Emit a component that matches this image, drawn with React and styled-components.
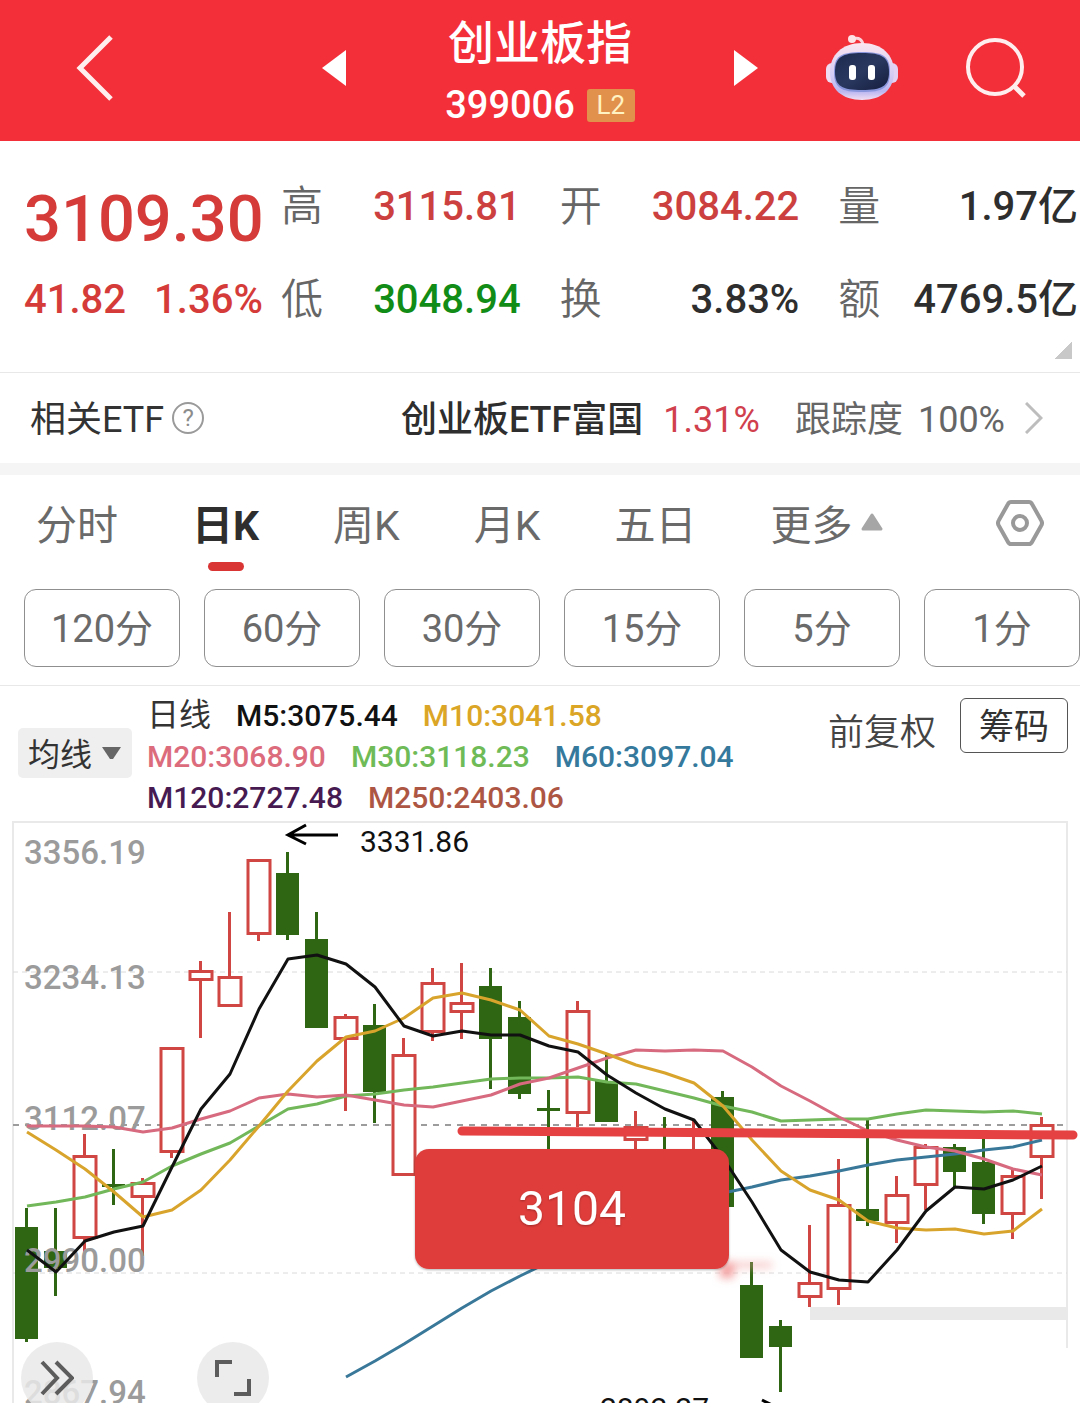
import React, { useState } from "react";
import styled, { createGlobalStyle } from "styled-components";

const GlobalStyle = createGlobalStyle`
  * {
    box-sizing: border-box;
  }
  body {
    margin: 0;
    background-color: #fff;
    color: #333;
    font-family: Roboto, "Noto Sans CJK SC", sans-serif;
  }
  button, select {
    font-family: inherit;
    margin: 0;
    padding: 0;
    border: none;
    background: none;
    color: inherit;
    cursor: pointer;
  }
  svg {
    display: block;
  }
`;

const Page = styled.div`
  width: 100%;
  overflow: hidden;
`;

/* header */

const Header = styled.header`
  display: grid;
  grid-template-columns: 32fr 36fr 32fr;
  align-items: center;
  height: 141px;
  background-color: #f32f39;
  color: #fff;
`;

const HeaderSide = styled.div`
  display: flex;
  align-items: center;
  justify-content: space-between;
  padding-bottom: 6px;
  padding-left: ${(props) => (props.$left ? "76px" : "0")};
  padding-right: ${(props) => (props.$left ? "0" : "54px")};
`;

const TitleBlock = styled.div`
  display: flex;
  flex-direction: column;
  align-items: center;
  padding-top: 5px;
`;

const Title = styled.h1`
  margin: 0;
  font-size: 46px;
  line-height: 64px;
  font-weight: 500;
`;

const CodeLine = styled.div`
  display: flex;
  align-items: center;
  gap: 12px;
  font-size: 38px;
  line-height: 60px;
  font-weight: 500;
`;

const LevelBadge = styled.span`
  width: 48px;
  border-radius: 3px;
  background-color: #e2914c;
  color: #fff3c4;
  font-size: 26px;
  line-height: 33px;
  font-weight: 400;
  text-align: center;
`;

/* quote */

const Quote = styled.section`
  padding: 36px 2px 13px 24px;
  border-bottom: 1px solid #e8e8e8;
`;

const QuoteBody = styled.div`
  display: flex;
`;

const PriceBlock = styled.div`
  width: 257px;
  flex-shrink: 0;
  color: #d43b39;
  font-weight: 500;
`;

const Price = styled.div`
  font-size: 65px;
  line-height: 84px;
`;

const Change = styled.div`
  display: flex;
  gap: 28px;
  margin-top: 9px;
  font-size: 40px;
  line-height: 60px;
`;

const Stats = styled.dl`
  flex: 1;
  display: grid;
  grid-template-columns: repeat(3, 1fr);
  gap: 33px 39px;
  margin: 0;
`;

const Stat = styled.div`
  display: flex;
  justify-content: space-between;
  white-space: nowrap;
  line-height: 60px;
`;

const StatLabel = styled.dt`
  color: #666;
  font-size: 42px;
  font-weight: 350;
`;

const StatValue = styled.dd`
  margin: 0;
  font-size: 40px;
  font-weight: 500;
  color: ${(props) => props.$color || "#2e2e2e"};
`;

const Corner = styled.div`
  width: 17px;
  height: 17px;
  margin: 12px 6px 0 auto;
  background: linear-gradient(135deg, transparent 50%, #c8c8c8 50%);
`;

/* related fund */

const EtfRow = styled.section`
  display: flex;
  align-items: center;
  height: 102px;
  padding: 0 37px 0 30px;
  border-bottom: 12px solid #f5f5f5;
  font-size: 36px;
`;

const EtfTitle = styled.span`
  padding-bottom: 4px;
`;

const HelpButton = styled.button`
  width: 32px;
  height: 32px;
  margin-left: 8px;
  border: 2px solid #9a9a9a;
  border-radius: 50%;
  color: #8c8c8c;
  font-size: 24px;
  line-height: 28px;
`;

const EtfLink = styled.a`
  display: flex;
  align-items: center;
  margin-left: auto;
  color: #666;
  text-decoration: none;
`;

const EtfTexts = styled.span`
  display: flex;
  align-items: baseline;
  padding-bottom: 4px;
`;

const EtfName = styled.span`
  color: #2e2e2e;
  font-weight: 500;
`;

const EtfChange = styled.span`
  margin: 0 35px 0 20px;
  color: #d0404d;
`;

const EtfTrack = styled.span`
  margin: 0 20px 0 15px;
`;

/* period switches */

const Tabs = styled.nav`
  display: flex;
  gap: 74px;
  height: 100px;
  padding: 0 36px;
`;

const Tab = styled.button`
  position: relative;
  display: flex;
  align-items: center;
  gap: 8px;
  padding-bottom: 6px;
  font-size: 41px;
  font-weight: ${(props) => (props.$active ? 700 : 400)};
  color: ${(props) => (props.$active ? "#2e2e2e" : "#6a6a6a")};

  &::after {
    content: "";
    display: ${(props) => (props.$active ? "block" : "none")};
    position: absolute;
    bottom: 4px;
    left: 50%;
    width: 36px;
    height: 9px;
    margin-left: -18px;
    border-radius: 5px;
    background-color: #d93535;
  }
`;

const SettingsButton = styled.button`
  margin-left: auto;
  padding-bottom: 4px;
`;

const Minutes = styled.div`
  display: grid;
  grid-template-columns: repeat(6, 1fr);
  gap: 24px;
  padding: 14px 0 18px 24px;
  border-bottom: 1px solid #e8e8e8;
`;

const MinuteButton = styled.button`
  height: 78px;
  padding-bottom: 5px;
  border: 1px solid #8f8f8f;
  border-radius: 12px;
  color: #6a6a6a;
  font-size: 38px;
`;

/* legend */

const LegendBar = styled.section`
  display: flex;
  align-items: flex-start;
  padding: 9px 12px 2px 18px;
`;

const SelectBox = styled.label`
  display: flex;
  align-items: center;
  width: 114px;
  height: 50px;
  margin-top: 33px;
  padding-left: 10px;
  border-radius: 5px;
  background-color: #efefef;

  select {
    appearance: none;
    width: 74px;
    padding-top: 4px;
    font-size: 32px;
    line-height: 46px;
  }
`;

const Legend = styled.div`
  flex: 1;
  margin-left: 15px;
  font-size: 30px;
  line-height: 41px;
  font-weight: 500;
`;

const LegendRow = styled.div`
  display: flex;
  gap: 25px;
`;

const LegendTitle = styled.span`
  font-size: 32px;
  font-weight: 400;
`;

const LegendItem = styled.span`
  color: ${(props) => props.$color};
  white-space: nowrap;
`;

const Adjust = styled.button`
  margin: 12px 24px 0 0;
  color: #444;
  font-size: 36px;
  line-height: 52px;
  font-weight: 350;
`;

const ChipButton = styled.button`
  width: 108px;
  height: 55px;
  margin-top: 3px;
  padding-top: 4px;
  border: 1px solid #555;
  border-radius: 6px;
  font-size: 35px;
  line-height: 48px;
`;

/* chart */

const ChartArea = styled.section`
  position: relative;
  overflow: hidden;

  svg.plot {
    width: 100%;
    height: auto;
  }
`;

const RoundButton = styled.button`
  position: absolute;
  bottom: -11px;
  left: ${(props) => props.$left}px;
  display: flex;
  align-items: center;
  justify-content: center;
  width: 72px;
  height: 72px;
  border-radius: 50%;
  background-color: rgba(233, 233, 233, 0.85);
`;

const RED = "#cf4642";
const GREEN = "#2f6613";

const stats = [
  { label: "高", value: "3115.81", color: "#cc4140" },
  { label: "开", value: "3084.22", color: "#cc4140" },
  { label: "量", value: "1.97亿" },
  { label: "低", value: "3048.94", color: "#118c16" },
  { label: "换", value: "3.83%" },
  { label: "额", value: "4769.5亿" },
];

const tabs = ["分时", "日K", "周K", "月K", "五日", "更多"];
const minutes = ["120分", "60分", "30分", "15分", "5分", "1分"];

const legend = [
  [
    { text: "M5:3075.44", color: "#111" },
    { text: "M10:3041.58", color: "#dba526" },
  ],
  [
    { text: "M20:3068.90", color: "#dc6b7c" },
    { text: "M30:3118.23", color: "#6fbb57" },
    { text: "M60:3097.04", color: "#35799d" },
  ],
  [
    { text: "M120:2727.48", color: "#471a52" },
    { text: "M250:2403.06", color: "#ad5644" },
  ],
];

const axis = [
  { text: "3356.19", y: 864 },
  { text: "3234.13", y: 989 },
  { text: "3112.07", y: 1130 },
  { text: "2990.00", y: 1272 },
  { text: "2867.94", y: 1404 },
];

// up, high, body top, body bottom, low
const candles = [
  [0, 1208, 1227, 1339, 1342],
  [0, 1208, 1251, 1268, 1296],
  [1, 1134, 1155, 1239, 1253],
  [0, 1149, 1184, 1187, 1205],
  [1, 1178, 1182, 1198, 1256],
  [1, 1047, 1047, 1153, 1158],
  [1, 961, 970, 981, 1038],
  [1, 912, 976, 1007, 1007],
  [1, 859, 859, 935, 941],
  [0, 852, 873, 935, 940],
  [0, 912, 939, 1028, 1028],
  [1, 1014, 1016, 1040, 1111],
  [0, 1004, 1025, 1092, 1123],
  [1, 1038, 1054, 1176, 1176],
  [1, 968, 982, 1033, 1041],
  [1, 963, 1002, 1013, 1039],
  [0, 968, 986, 1039, 1089],
  [0, 1001, 1017, 1094, 1099],
  [0, 1090, 1108, 1111, 1170],
  [1, 1001, 1010, 1114, 1127],
  [0, 1055, 1081, 1122, 1122],
  [1, 1111, 1126, 1141, 1170],
  [0, 1117, 1160, 1200, 1210],
  [1, 1121, 1160, 1200, 1210],
  [0, 1091, 1097, 1207, 1207],
  [0, 1262, 1285, 1358, 1358],
  [0, 1320, 1326, 1347, 1392],
  [1, 1225, 1282, 1298, 1307],
  [1, 1159, 1204, 1290, 1305],
  [0, 1120, 1209, 1221, 1226],
  [1, 1176, 1194, 1224, 1243],
  [1, 1144, 1146, 1186, 1210],
  [0, 1144, 1147, 1172, 1188],
  [0, 1138, 1162, 1214, 1224],
  [1, 1169, 1175, 1215, 1239],
  [1, 1117, 1124, 1158, 1199],
];

const averages = [
  {
    color: "#3a7899",
    start: 11,
    values: [
      1377, 1361, 1344, 1326, 1308, 1291, 1276, 1262, 1251, 1240, 1229, 1218,
      1207, 1193, 1187, 1180, 1176, 1171, 1165, 1160, 1157, 1154, 1150, 1147,
      1140,
    ],
  },
  {
    color: "#72b85a",
    start: 0,
    values: [
      1206, 1202, 1197, 1189, 1182, 1166, 1154, 1143, 1126, 1109, 1104, 1096,
      1094, 1090, 1087, 1083, 1079, 1078, 1078, 1077, 1082, 1084, 1091, 1098,
      1106, 1112, 1121, 1120, 1119, 1119, 1114, 1110, 1111, 1112, 1111, 1114,
    ],
  },
  {
    color: "#d76a7e",
    start: 0,
    values: [
      1126, 1126, 1126, 1127, 1132, 1128, 1119, 1111, 1098, 1094, 1097, 1095,
      1100, 1105, 1107, 1101, 1095, 1084, 1078, 1068, 1058, 1050, 1051, 1050,
      1051, 1067, 1086, 1101, 1117, 1131, 1140, 1147, 1151, 1159, 1169, 1175,
    ],
  },
  {
    color: "#d9a42c",
    start: 0,
    values: [
      1132, 1150, 1169, 1192, 1217, 1210, 1190, 1160, 1126, 1091, 1061, 1037,
      1031, 1018, 998, 993, 1000, 1010, 1036, 1044, 1054, 1065, 1073, 1083,
      1106, 1140, 1171, 1190, 1200, 1221, 1228, 1230, 1229, 1234, 1231, 1209,
    ],
  },
  {
    color: "#111",
    start: 0,
    values: [
      1250, 1272, 1241, 1232, 1226, 1167, 1109, 1074, 1009, 959, 955, 964, 987,
      1026, 1036, 1031, 1035, 1035, 1046, 1052, 1075, 1093, 1109, 1120, 1158,
      1202, 1250, 1272, 1280, 1282, 1250, 1211, 1187, 1189, 1180, 1166,
    ],
  },
];

function Robot() {
  return (
    <svg width="72" height="68" viewBox="0 0 72 68">
      <defs>
        <linearGradient id="shell" x1="0" y1="0" x2="0" y2="1">
          <stop offset="0" stopColor="#fbe6f0" />
          <stop offset="0.55" stopColor="#d5cdf5" />
          <stop offset="0.85" stopColor="#b9b6f0" />
          <stop offset="1" stopColor="#f3dff2" />
        </linearGradient>
        <linearGradient id="visor" x1="0" y1="0" x2="1" y2="1">
          <stop offset="0" stopColor="#1d2a4f" />
          <stop offset="0.5" stopColor="#2a3860" />
          <stop offset="1" stopColor="#141d3d" />
        </linearGradient>
      </defs>
      <path
        d="M27 5C33 3 37 6 37 12"
        fill="none"
        stroke="#fbd5dc"
        strokeWidth="3"
      />
      <circle cx="26" cy="5" r="4" fill="#fde3e6" />
      <rect x="0" y="29" width="12" height="20" rx="6" fill="#efdcf3" />
      <rect x="60" y="29" width="12" height="20" rx="6" fill="#e3d2f3" />
      <path
        d="M36 9C56 9 68 21 68 38C68 55 56 66 36 66C16 66 4 55 4 38C4 21 16 9 36 9Z"
        fill="url(#shell)"
      />
      <path
        d="M36 18C57 18 64 22 64 38C64 54 57 58 36 58C15 58 8 54 8 38C8 22 15 18 36 18Z"
        fill="#8a96dc"
      />
      <path
        d="M36 19C56 19 63 23 63 38C63 52 56 56 36 56C16 56 9 52 9 38C9 23 16 19 36 19Z"
        fill="url(#visor)"
      />
      <rect x="23" y="31" width="7" height="15" rx="3" fill="#fff" />
      <rect x="42" y="31" width="7" height="15" rx="3" fill="#fff" />
    </svg>
  );
}

function Candle({ index, data }) {
  const [up, high, top, bottom, low] = data;
  const x = 15 + index * 29;
  const color = up ? RED : GREEN;
  return (
    <g>
      <rect x={x + 10} y={high} width="3" height={low - high} fill={color} />
      {up ? (
        <rect
          x={x + 1}
          y={top + 1.5}
          width="22"
          height={bottom - top - 3}
          fill="#fff"
          stroke={color}
          strokeWidth="3"
        />
      ) : (
        <rect x={x} y={top} width="23" height={bottom - top} fill={color} />
      )}
    </g>
  );
}

function KLine() {
  return (
    <svg className="plot" viewBox="0 820 1080 583" role="img" aria-label="日K">
      <defs>
        <filter id="soft" x="-50%" y="-100%" width="200%" height="300%">
          <feGaussianBlur stdDeviation="4" />
        </filter>
        <filter id="lift" x="-10%" y="-10%" width="120%" height="130%">
          <feDropShadow dx="0" dy="1" stdDeviation="1" floodOpacity="0.3" />
        </filter>
      </defs>
      <path d="M13 1403V822H1067V1348" fill="none" stroke="#e9e9e9" strokeWidth="2" />
      <path d="M13 972H1067M13 1273H1067" stroke="#dadada" strokeDasharray="5 4" />
      <path d="M13 1125H1067" stroke="#9c9c9c" strokeWidth="2" strokeDasharray="6 6" />
      <rect x="810" y="1307" width="258" height="13" fill="#e9e9e9" />

      {candles.map((data, index) => (
        <Candle key={index} index={index} data={data} />
      ))}

      <g fill="#9b9b9b" fontSize="33" fontWeight="500">
        {axis.map((item) => (
          <text key={item.text} x="24" y={item.y}>
            {item.text}
          </text>
        ))}
      </g>

      {averages.map((line) => (
        <polyline
          key={line.color}
          points={line.values
            .map((y, i) => `${27 + (line.start + i) * 29},${y}`)
            .join(" ")}
          fill="none"
          stroke={line.color}
          strokeWidth="3"
          strokeLinejoin="round"
        />
      ))}

      <g fill="none" stroke="#000" strokeWidth="3">
        <path d="M338 835H288M306 825L288 835L306 844" />
        <path d="M762 1400L780 1409" />
      </g>
      <g fill="#111" fontSize="30">
        <text x="360" y="852">3331.86</text>
        <text x="600" y="1419">2892.27</text>
      </g>

      <path d="M462 1131L1073 1135" stroke="#e54142" strokeWidth="9" strokeLinecap="round" />
      <g filter="url(#soft)" fill="#f4a3a3">
        <rect x="720" y="1262" width="14" height="16" />
        <rect x="726" y="1262" width="46" height="6" opacity="0.6" />
      </g>
      <rect x="415" y="1149" width="314" height="120" rx="14" fill="#de3e3b" filter="url(#lift)" />
      <text
        x="572"
        y="1225"
        fill="#fff"
        fontSize="48"
        textAnchor="middle"
        filter="url(#lift)"
      >
        3104
      </text>
    </svg>
  );
}

export default function App() {
  const [active, setActive] = useState("日K");

  return (
    <Page lang="zh-CN">
      <GlobalStyle />
      <Header>
        <HeaderSide $left>
          <button aria-label="返回">
            <svg width="38" height="66" viewBox="0 0 38 66">
              <path d="M35 2L4 33L35 64" fill="none" stroke="#ffeeee" strokeWidth="5" />
            </svg>
          </button>
          <button aria-label="上一个">
            <svg width="24" height="36" viewBox="0 0 24 36">
              <path d="M24 0V36L0 18Z" fill="#fff" />
            </svg>
          </button>
        </HeaderSide>
        <TitleBlock>
          <Title>创业板指</Title>
          <CodeLine>
            399006 <LevelBadge>L2</LevelBadge>
          </CodeLine>
        </TitleBlock>
        <HeaderSide>
          <button aria-label="下一个">
            <svg width="24" height="36" viewBox="0 0 24 36">
              <path d="M0 0V36L24 18Z" fill="#fff" />
            </svg>
          </button>
          <button aria-label="助手">
            <Robot />
          </button>
          <button aria-label="搜索">
            <svg width="60" height="60" viewBox="0 0 60 60">
              <g fill="none" stroke="#ffeeee" strokeWidth="4">
                <circle cx="29" cy="29" r="27" />
                <path d="M48 48L58 58" strokeWidth="5" />
              </g>
            </svg>
          </button>
        </HeaderSide>
      </Header>

      <Quote>
        <QuoteBody>
          <PriceBlock>
            <Price>3109.30</Price>
            <Change>
              <span>41.82</span>
              <span>1.36%</span>
            </Change>
          </PriceBlock>
          <Stats>
            {stats.map((item) => (
              <Stat key={item.label}>
                <StatLabel>{item.label}</StatLabel>
                <StatValue $color={item.color}>{item.value}</StatValue>
              </Stat>
            ))}
          </Stats>
        </QuoteBody>
        <Corner />
      </Quote>

      <EtfRow>
        <EtfTitle>相关ETF</EtfTitle>
        <HelpButton aria-label="说明">?</HelpButton>
        <EtfLink href="#etf">
          <EtfTexts>
            <EtfName>创业板ETF富国</EtfName>
            <EtfChange>1.31%</EtfChange>
            <span>跟踪度</span>
            <EtfTrack>100%</EtfTrack>
          </EtfTexts>
          <svg width="18" height="32" viewBox="0 0 18 32">
            <path d="M1 1L16 16L1 31" fill="none" stroke="#bdbdbd" strokeWidth="3" />
          </svg>
        </EtfLink>
      </EtfRow>

      <Tabs>
        {tabs.map((name) => (
          <Tab key={name} $active={name === active} onClick={() => setActive(name)}>
            {name}
            {name === "更多" && (
              <svg width="22" height="18" viewBox="0 0 22 18">
                <path
                  d="M11 2L20 16H2Z"
                  fill="#a6a6a6"
                  stroke="#a6a6a6"
                  strokeWidth="3"
                  strokeLinejoin="round"
                />
              </svg>
            )}
          </Tab>
        ))}
        <SettingsButton aria-label="设置">
          <svg width="48" height="46" viewBox="0 0 48 46">
            <g fill="none" stroke="#999" strokeWidth="4" strokeLinejoin="round">
              <path d="M15 2H33Q35 2 36 4L45 20Q47 23 45 26L36 42Q35 44 33 44H15Q13 44 12 42L3 26Q1 23 3 20L12 4Q13 2 15 2Z" />
              <circle cx="24" cy="23" r="7" />
            </g>
          </svg>
        </SettingsButton>
      </Tabs>

      <Minutes>
        {minutes.map((name) => (
          <MinuteButton key={name}>{name}</MinuteButton>
        ))}
      </Minutes>

      <LegendBar>
        <SelectBox>
          <select aria-label="指标" defaultValue="均线">
            <option>均线</option>
          </select>
          <svg width="19" height="13" viewBox="0 0 19 13">
            <path d="M0 0H19L11 12H8Z" fill="#666" />
          </svg>
        </SelectBox>
        <Legend>
          {legend.map((row, index) => (
            <LegendRow key={index}>
              {index === 0 && <LegendTitle>日线</LegendTitle>}
              {row.map((item) => (
                <LegendItem key={item.text} $color={item.color}>
                  {item.text}
                </LegendItem>
              ))}
            </LegendRow>
          ))}
        </Legend>
        <Adjust>前复权</Adjust>
        <ChipButton>筹码</ChipButton>
      </LegendBar>

      <ChartArea>
        <KLine />
        <RoundButton $left={21} aria-label="展开">
          <svg width="34" height="36" viewBox="0 0 34 36">
            <path
              d="M2 2L17 18L2 34M16 2L32 18L16 34"
              fill="none"
              stroke="#5c5c5c"
              strokeWidth="4"
            />
          </svg>
        </RoundButton>
        <RoundButton $left={197} aria-label="全屏">
          <svg width="36" height="36" viewBox="0 0 36 36">
            <path
              d="M2 17V2H17M19 34H34V19"
              fill="none"
              stroke="#5c5c5c"
              strokeWidth="4"
            />
          </svg>
        </RoundButton>
      </ChartArea>
    </Page>
  );
}
